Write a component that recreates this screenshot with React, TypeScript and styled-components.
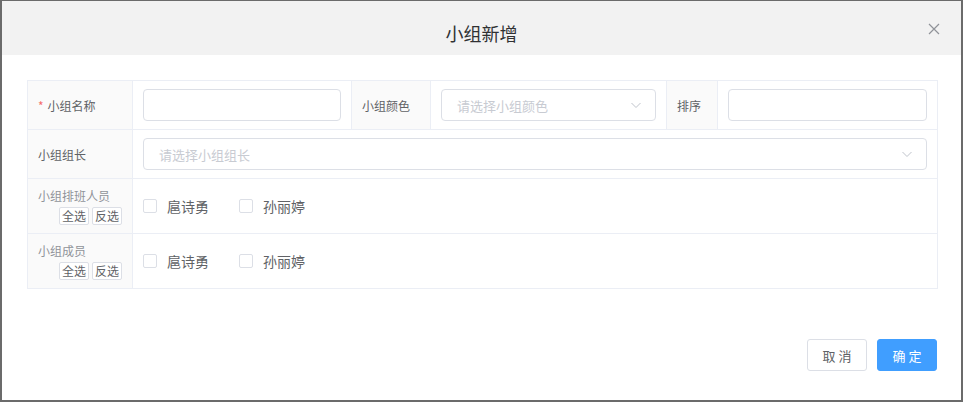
import styled, { createGlobalStyle } from "styled-components";

const GlobalStyle = createGlobalStyle`
  html, body {
    margin: 0;
    padding: 0;
    background: #6b6b6b;
  }
  body {
    font-family: "Noto Sans CJK SC", "Noto Sans", "Liberation Sans", sans-serif;
  }
  * {
    box-sizing: border-box;
  }
`;

const Overlay = styled.div`
  width: 963px;
  height: 402px;
  padding: 1px 2px 2px 2px;
  background: #6b6b6b;
`;

const Dialog = styled.div`
  width: 959px;
  height: 399px;
  background: #fff;
  display: flex;
  flex-direction: column;
`;

const Header = styled.div`
  position: relative;
  height: 54px;
  background: #f2f2f2;
  padding: 20px 20px 10px;
  text-align: center;
`;

const Title = styled.span`
  font-size: 18px;
  line-height: 24px;
  color: #303133;
`;

const CloseButton = styled.button`
  position: absolute;
  top: 21px;
  right: 20px;
  width: 14px;
  height: 14px;
  padding: 0;
  border: none;
  background: transparent;
  display: flex;
  align-items: center;
  justify-content: center;
  cursor: pointer;
`;

const Body = styled.div`
  padding: 25px 24px 0 25px;
  flex: 1;
`;

const FormTable = styled.table`
  width: 910px;
  border-collapse: collapse;
  table-layout: fixed;
  font-size: 12px;
`;

const LabelCell = styled.td<{ $muted?: boolean }>`
  border: 1px solid #ebeef5;
  background: #fafafa;
  padding: 8px 10px;
  color: ${(p) => (p.$muted ? "#909399" : "#606266")};
  vertical-align: middle;
  white-space: nowrap;
`;

const ValueCell = styled.td`
  border: 1px solid #ebeef5;
  padding: 8px 10px;
  vertical-align: middle;
`;

const Star = styled.span`
  color: #f56c6c;
  margin-right: 4px;
`;

const LabelText = styled.div`
  line-height: 18px;
`;

const MiniActions = styled.div`
  display: flex;
  justify-content: flex-end;
  gap: 3px;
  margin-top: 2px;
`;

const MiniButton = styled.button`
  height: 18px;
  padding: 0 2px;
  font-family: inherit;
  font-size: 12px;
  line-height: 16px;
  color: #606266;
  background: #fff;
  border: 1px solid #dcdfe6;
  border-radius: 2px;
  cursor: pointer;
`;

const TextInput = styled.input`
  display: block;
  width: 100%;
  height: 32px;
  padding: 0 15px;
  border: 1px solid #dcdfe6;
  border-radius: 4px;
  font-family: inherit;
  font-size: 13px;
  color: #606266;
  outline: none;
`;

const SelectBox = styled.div`
  display: flex;
  align-items: center;
  justify-content: space-between;
  height: 32px;
  padding: 0 13px 0 15px;
  border: 1px solid #dcdfe6;
  border-radius: 4px;
  background: #fff;
  cursor: pointer;
`;

const Placeholder = styled.span`
  font-size: 13px;
  color: #c8cbd2;
`;

const CheckGroup = styled.div`
  display: flex;
  align-items: center;
  gap: 30px;
`;

const CheckItem = styled.label`
  display: flex;
  align-items: center;
  gap: 10px;
  font-size: 14px;
  color: #606266;
  cursor: pointer;
`;

const CheckBox = styled.span`
  width: 14px;
  height: 14px;
  border: 1px solid #dcdfe6;
  border-radius: 2px;
  background: #fff;
`;

const Footer = styled.div`
  display: flex;
  justify-content: flex-end;
  gap: 10px;
  padding: 0 24px 29px;
`;

const FooterButton = styled.button<{ $primary?: boolean }>`
  width: 60px;
  height: 32px;
  font-family: inherit;
  font-size: 13px;
  border-radius: 3px;
  cursor: pointer;
  border: 1px solid ${(p) => (p.$primary ? "#409eff" : "#dcdfe6")};
  background: ${(p) => (p.$primary ? "#409eff" : "#fff")};
  color: ${(p) => (p.$primary ? "#fff" : "#606266")};
`;

const Chevron = () => (
  <svg width="12" height="12" viewBox="0 0 12 12" fill="none">
    <path d="M1.5 4 L6 8.5 L10.5 4" stroke="#c0c4cc" strokeWidth="1" />
  </svg>
);

const people = ["扈诗勇", "孙丽婷"];

function Checks() {
  return (
    <CheckGroup>
      {people.map((name) => (
        <CheckItem key={name}>
          <CheckBox />
          {name}
        </CheckItem>
      ))}
    </CheckGroup>
  );
}

export default function App() {
  return (
    <>
      <GlobalStyle />
      <Overlay>
        <Dialog>
          <Header>
            <Title>小组新增</Title>
            <CloseButton aria-label="关闭">
              <svg width="12" height="12" viewBox="0 0 12 12">
                <path d="M1 1 L11 11 M11 1 L1 11" stroke="#909399" strokeWidth="1.2" />
              </svg>
            </CloseButton>
          </Header>
          <Body>
            <FormTable>
              <colgroup>
                <col style={{ width: 105 }} />
                <col style={{ width: 219 }} />
                <col style={{ width: 79 }} />
                <col style={{ width: 236 }} />
                <col style={{ width: 51 }} />
                <col style={{ width: 220 }} />
              </colgroup>
              <tbody>
                <tr>
                  <LabelCell>
                    <Star>*</Star>小组名称
                  </LabelCell>
                  <ValueCell>
                    <TextInput />
                  </ValueCell>
                  <LabelCell>小组颜色</LabelCell>
                  <ValueCell>
                    <SelectBox>
                      <Placeholder>请选择小组颜色</Placeholder>
                      <Chevron />
                    </SelectBox>
                  </ValueCell>
                  <LabelCell>排序</LabelCell>
                  <ValueCell>
                    <TextInput />
                  </ValueCell>
                </tr>
                <tr>
                  <LabelCell>小组组长</LabelCell>
                  <ValueCell colSpan={5}>
                    <SelectBox>
                      <Placeholder>请选择小组组长</Placeholder>
                      <Chevron />
                    </SelectBox>
                  </ValueCell>
                </tr>
                <tr>
                  <LabelCell $muted>
                    <LabelText>小组排班人员</LabelText>
                    <MiniActions>
                      <MiniButton>全选</MiniButton>
                      <MiniButton>反选</MiniButton>
                    </MiniActions>
                  </LabelCell>
                  <ValueCell colSpan={5}>
                    <Checks />
                  </ValueCell>
                </tr>
                <tr>
                  <LabelCell $muted>
                    <LabelText>小组成员</LabelText>
                    <MiniActions>
                      <MiniButton>全选</MiniButton>
                      <MiniButton>反选</MiniButton>
                    </MiniActions>
                  </LabelCell>
                  <ValueCell colSpan={5}>
                    <Checks />
                  </ValueCell>
                </tr>
              </tbody>
            </FormTable>
          </Body>
          <Footer>
            <FooterButton>取 消</FooterButton>
            <FooterButton $primary>确 定</FooterButton>
          </Footer>
        </Dialog>
      </Overlay>
    </>
  );
}
